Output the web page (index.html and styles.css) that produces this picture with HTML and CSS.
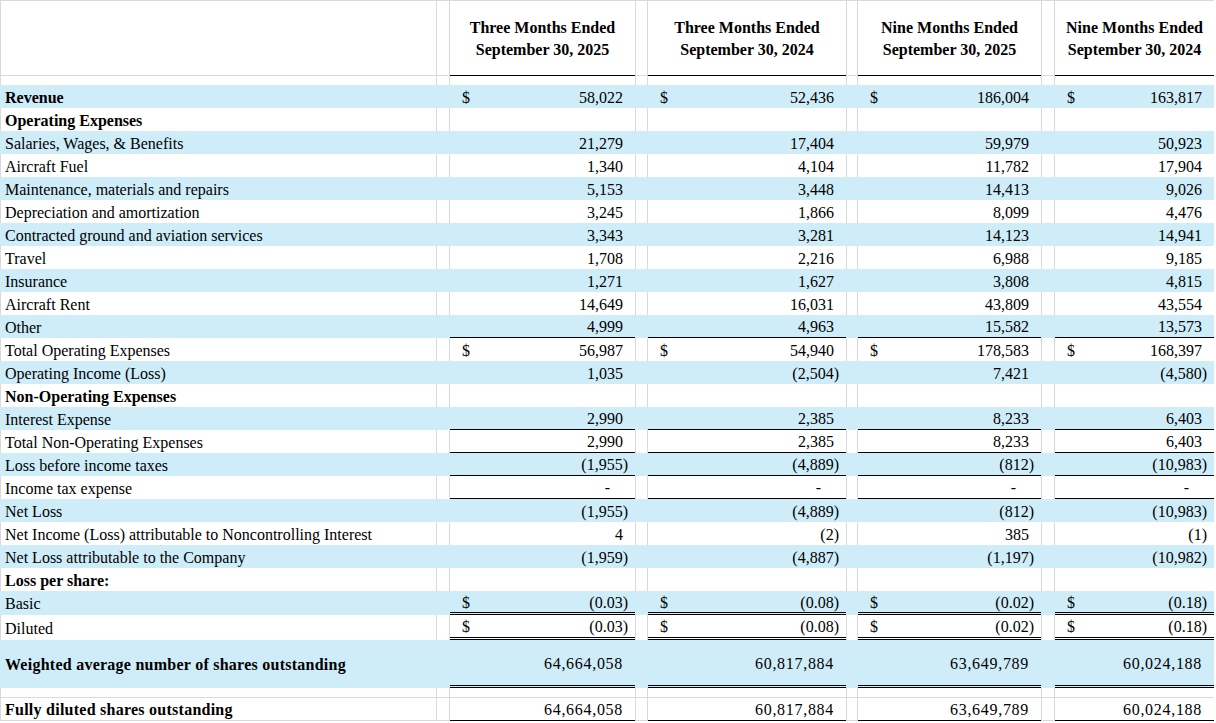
FILE: index.html
```html
<!DOCTYPE html>
<html lang="en">
<head>
<meta charset="utf-8">
<title>Consolidated Statements of Operations</title>
<link rel="stylesheet" href="styles.css">
</head>
<body>
<table class="fin">
  <colgroup>
    <col class="w-lbl"><col class="w-sp1"><col class="w-d1"><col class="w-sp2"><col class="w-d2"><col class="w-sp3"><col class="w-d3"><col class="w-sp4"><col class="w-d4">
  </colgroup>
  <thead>
    <tr class="hd">
      <th class="lbl"></th><th class="sp"></th>
      <th class="v">Three Months Ended<br>September 30, 2025</th><th class="sp"></th>
      <th class="v">Three Months Ended<br>September 30, 2024</th><th class="sp"></th>
      <th class="v">Nine Months Ended<br>September 30, 2025</th><th class="sp"></th>
      <th class="v">Nine Months Ended<br>September 30, 2024</th>
    </tr>
  </thead>
  <tbody>
    <tr class="gap"><td class="lbl"></td><td class="sp"></td><td class="v"></td><td class="sp"></td><td class="v"></td><td class="sp"></td><td class="v"></td><td class="sp"></td><td class="v"></td></tr>

    <tr class="b"><td class="lbl bold">Revenue</td><td class="sp"></td>
      <td class="v"><div class="amt"><span class="cur">$</span><span class="n">58,022</span></div></td><td class="sp"></td>
      <td class="v"><div class="amt"><span class="cur">$</span><span class="n">52,436</span></div></td><td class="sp"></td>
      <td class="v"><div class="amt"><span class="cur">$</span><span class="n">186,004</span></div></td><td class="sp"></td>
      <td class="v"><div class="amt"><span class="cur">$</span><span class="n">163,817</span></div></td></tr>

    <tr><td class="lbl bold">Operating Expenses</td><td class="sp"></td><td class="v"></td><td class="sp"></td><td class="v"></td><td class="sp"></td><td class="v"></td><td class="sp"></td><td class="v"></td></tr>

    <tr class="b"><td class="lbl">Salaries, Wages, &amp; Benefits</td><td class="sp"></td>
      <td class="v"><div class="amt"><span class="n">21,279</span></div></td><td class="sp"></td>
      <td class="v"><div class="amt"><span class="n">17,404</span></div></td><td class="sp"></td>
      <td class="v"><div class="amt"><span class="n">59,979</span></div></td><td class="sp"></td>
      <td class="v"><div class="amt"><span class="n">50,923</span></div></td></tr>

    <tr><td class="lbl">Aircraft Fuel</td><td class="sp"></td>
      <td class="v"><div class="amt"><span class="n">1,340</span></div></td><td class="sp"></td>
      <td class="v"><div class="amt"><span class="n">4,104</span></div></td><td class="sp"></td>
      <td class="v"><div class="amt"><span class="n">11,782</span></div></td><td class="sp"></td>
      <td class="v"><div class="amt"><span class="n">17,904</span></div></td></tr>

    <tr class="b"><td class="lbl">Maintenance, materials and repairs</td><td class="sp"></td>
      <td class="v"><div class="amt"><span class="n">5,153</span></div></td><td class="sp"></td>
      <td class="v"><div class="amt"><span class="n">3,448</span></div></td><td class="sp"></td>
      <td class="v"><div class="amt"><span class="n">14,413</span></div></td><td class="sp"></td>
      <td class="v"><div class="amt"><span class="n">9,026</span></div></td></tr>

    <tr><td class="lbl">Depreciation and amortization</td><td class="sp"></td>
      <td class="v"><div class="amt"><span class="n">3,245</span></div></td><td class="sp"></td>
      <td class="v"><div class="amt"><span class="n">1,866</span></div></td><td class="sp"></td>
      <td class="v"><div class="amt"><span class="n">8,099</span></div></td><td class="sp"></td>
      <td class="v"><div class="amt"><span class="n">4,476</span></div></td></tr>

    <tr class="b"><td class="lbl">Contracted ground and aviation services</td><td class="sp"></td>
      <td class="v"><div class="amt"><span class="n">3,343</span></div></td><td class="sp"></td>
      <td class="v"><div class="amt"><span class="n">3,281</span></div></td><td class="sp"></td>
      <td class="v"><div class="amt"><span class="n">14,123</span></div></td><td class="sp"></td>
      <td class="v"><div class="amt"><span class="n">14,941</span></div></td></tr>

    <tr><td class="lbl">Travel</td><td class="sp"></td>
      <td class="v"><div class="amt"><span class="n">1,708</span></div></td><td class="sp"></td>
      <td class="v"><div class="amt"><span class="n">2,216</span></div></td><td class="sp"></td>
      <td class="v"><div class="amt"><span class="n">6,988</span></div></td><td class="sp"></td>
      <td class="v"><div class="amt"><span class="n">9,185</span></div></td></tr>

    <tr class="b"><td class="lbl">Insurance</td><td class="sp"></td>
      <td class="v"><div class="amt"><span class="n">1,271</span></div></td><td class="sp"></td>
      <td class="v"><div class="amt"><span class="n">1,627</span></div></td><td class="sp"></td>
      <td class="v"><div class="amt"><span class="n">3,808</span></div></td><td class="sp"></td>
      <td class="v"><div class="amt"><span class="n">4,815</span></div></td></tr>

    <tr><td class="lbl">Aircraft Rent</td><td class="sp"></td>
      <td class="v"><div class="amt"><span class="n">14,649</span></div></td><td class="sp"></td>
      <td class="v"><div class="amt"><span class="n">16,031</span></div></td><td class="sp"></td>
      <td class="v"><div class="amt"><span class="n">43,809</span></div></td><td class="sp"></td>
      <td class="v"><div class="amt"><span class="n">43,554</span></div></td></tr>

    <tr class="b ul"><td class="lbl">Other</td><td class="sp"></td>
      <td class="v"><div class="amt"><span class="n">4,999</span></div></td><td class="sp"></td>
      <td class="v"><div class="amt"><span class="n">4,963</span></div></td><td class="sp"></td>
      <td class="v"><div class="amt"><span class="n">15,582</span></div></td><td class="sp"></td>
      <td class="v"><div class="amt"><span class="n">13,573</span></div></td></tr>

    <tr><td class="lbl">Total Operating Expenses</td><td class="sp"></td>
      <td class="v"><div class="amt"><span class="cur">$</span><span class="n">56,987</span></div></td><td class="sp"></td>
      <td class="v"><div class="amt"><span class="cur">$</span><span class="n">54,940</span></div></td><td class="sp"></td>
      <td class="v"><div class="amt"><span class="cur">$</span><span class="n">178,583</span></div></td><td class="sp"></td>
      <td class="v"><div class="amt"><span class="cur">$</span><span class="n">168,397</span></div></td></tr>

    <tr class="b"><td class="lbl">Operating Income (Loss)</td><td class="sp"></td>
      <td class="v"><div class="amt"><span class="n">1,035</span></div></td><td class="sp"></td>
      <td class="v"><div class="amt"><span class="n neg">(2,504)</span></div></td><td class="sp"></td>
      <td class="v"><div class="amt"><span class="n">7,421</span></div></td><td class="sp"></td>
      <td class="v"><div class="amt"><span class="n neg">(4,580)</span></div></td></tr>

    <tr><td class="lbl bold">Non-Operating Expenses</td><td class="sp"></td><td class="v"></td><td class="sp"></td><td class="v"></td><td class="sp"></td><td class="v"></td><td class="sp"></td><td class="v"></td></tr>

    <tr class="b ul"><td class="lbl">Interest Expense</td><td class="sp"></td>
      <td class="v"><div class="amt"><span class="n">2,990</span></div></td><td class="sp"></td>
      <td class="v"><div class="amt"><span class="n">2,385</span></div></td><td class="sp"></td>
      <td class="v"><div class="amt"><span class="n">8,233</span></div></td><td class="sp"></td>
      <td class="v"><div class="amt"><span class="n">6,403</span></div></td></tr>

    <tr class="ul"><td class="lbl">Total Non-Operating Expenses</td><td class="sp"></td>
      <td class="v"><div class="amt"><span class="n">2,990</span></div></td><td class="sp"></td>
      <td class="v"><div class="amt"><span class="n">2,385</span></div></td><td class="sp"></td>
      <td class="v"><div class="amt"><span class="n">8,233</span></div></td><td class="sp"></td>
      <td class="v"><div class="amt"><span class="n">6,403</span></div></td></tr>

    <tr class="b ul"><td class="lbl">Loss before income taxes</td><td class="sp"></td>
      <td class="v"><div class="amt"><span class="n neg">(1,955)</span></div></td><td class="sp"></td>
      <td class="v"><div class="amt"><span class="n neg">(4,889)</span></div></td><td class="sp"></td>
      <td class="v"><div class="amt"><span class="n neg">(812)</span></div></td><td class="sp"></td>
      <td class="v"><div class="amt"><span class="n neg">(10,983)</span></div></td></tr>

    <tr class="ul"><td class="lbl">Income tax expense</td><td class="sp"></td>
      <td class="v"><div class="amt"><span class="n zero">-</span></div></td><td class="sp"></td>
      <td class="v"><div class="amt"><span class="n zero">-</span></div></td><td class="sp"></td>
      <td class="v"><div class="amt"><span class="n zero">-</span></div></td><td class="sp"></td>
      <td class="v"><div class="amt"><span class="n zero">-</span></div></td></tr>

    <tr class="b"><td class="lbl">Net Loss</td><td class="sp"></td>
      <td class="v"><div class="amt"><span class="n neg">(1,955)</span></div></td><td class="sp"></td>
      <td class="v"><div class="amt"><span class="n neg">(4,889)</span></div></td><td class="sp"></td>
      <td class="v"><div class="amt"><span class="n neg">(812)</span></div></td><td class="sp"></td>
      <td class="v"><div class="amt"><span class="n neg">(10,983)</span></div></td></tr>

    <tr><td class="lbl">Net Income (Loss) attributable to Noncontrolling Interest</td><td class="sp"></td>
      <td class="v"><div class="amt"><span class="n">4</span></div></td><td class="sp"></td>
      <td class="v"><div class="amt"><span class="n neg">(2)</span></div></td><td class="sp"></td>
      <td class="v"><div class="amt"><span class="n">385</span></div></td><td class="sp"></td>
      <td class="v"><div class="amt"><span class="n neg">(1)</span></div></td></tr>

    <tr class="b"><td class="lbl">Net Loss attributable to the Company</td><td class="sp"></td>
      <td class="v"><div class="amt"><span class="n neg">(1,959)</span></div></td><td class="sp"></td>
      <td class="v"><div class="amt"><span class="n neg">(4,887)</span></div></td><td class="sp"></td>
      <td class="v"><div class="amt"><span class="n neg">(1,197)</span></div></td><td class="sp"></td>
      <td class="v"><div class="amt"><span class="n neg">(10,982)</span></div></td></tr>

    <tr><td class="lbl bold">Loss per share:</td><td class="sp"></td><td class="v"></td><td class="sp"></td><td class="v"></td><td class="sp"></td><td class="v"></td><td class="sp"></td><td class="v"></td></tr>

    <tr class="b dbl r24"><td class="lbl">Basic</td><td class="sp"></td>
      <td class="v"><div class="amt"><span class="cur">$</span><span class="n neg">(0.03)</span></div></td><td class="sp"></td>
      <td class="v"><div class="amt"><span class="cur">$</span><span class="n neg">(0.08)</span></div></td><td class="sp"></td>
      <td class="v"><div class="amt"><span class="cur">$</span><span class="n neg">(0.02)</span></div></td><td class="sp"></td>
      <td class="v"><div class="amt"><span class="cur">$</span><span class="n neg">(0.18)</span></div></td></tr>

    <tr class="dbl r25"><td class="lbl">Diluted</td><td class="sp"></td>
      <td class="v"><div class="amt"><span class="cur">$</span><span class="n neg">(0.03)</span></div></td><td class="sp"></td>
      <td class="v"><div class="amt"><span class="cur">$</span><span class="n neg">(0.08)</span></div></td><td class="sp"></td>
      <td class="v"><div class="amt"><span class="cur">$</span><span class="n neg">(0.02)</span></div></td><td class="sp"></td>
      <td class="v"><div class="amt"><span class="cur">$</span><span class="n neg">(0.18)</span></div></td></tr>

    <tr class="b dbl tall wide"><td class="lbl bold">Weighted average number of shares outstanding</td><td class="sp"></td>
      <td class="v"><div class="amt"><span class="n">64,664,058</span></div></td><td class="sp"></td>
      <td class="v"><div class="amt"><span class="n">60,817,884</span></div></td><td class="sp"></td>
      <td class="v"><div class="amt"><span class="n">63,649,789</span></div></td><td class="sp"></td>
      <td class="v"><div class="amt"><span class="n">60,024,188</span></div></td></tr>

    <tr class="gap"><td class="lbl"></td><td class="sp"></td><td class="v"></td><td class="sp"></td><td class="v"></td><td class="sp"></td><td class="v"></td><td class="sp"></td><td class="v"></td></tr>

    <tr class="ul last wide"><td class="lbl bold">Fully diluted shares outstanding</td><td class="sp"></td>
      <td class="v"><div class="amt"><span class="n">64,664,058</span></div></td><td class="sp"></td>
      <td class="v"><div class="amt"><span class="n">60,817,884</span></div></td><td class="sp"></td>
      <td class="v"><div class="amt"><span class="n">63,649,789</span></div></td><td class="sp"></td>
      <td class="v"><div class="amt"><span class="n">60,024,188</span></div></td></tr>
  </tbody>
</table>
</body>
</html>
```

FILE: styles.css
```css
html, body {
  margin: 0;
  padding: 0;
  background: #ffffff;
}

body {
  font-family: "Liberation Serif", "Times New Roman", serif;
  font-size: 16px;
  color: #000000;
}

.fin {
  width: 1214px;
  table-layout: fixed;
  border-collapse: separate;
  border-spacing: 0;
}

.w-lbl { width: 436px; }
.w-sp1 { width: 14px; }
.w-d1  { width: 185px; }
.w-sp2 { width: 13px; }
.w-d2  { width: 198px; }
.w-sp3 { width: 12px; }
.w-d3  { width: 183px; }
.w-sp4 { width: 14px; }
.w-d4  { width: 159px; }

.fin th,
.fin td {
  padding: 2px 0 0 0;
  vertical-align: middle;
  white-space: nowrap;
  line-height: 18px;
}

.fin tr { height: 23px; }

/* grid lines */
.fin .lbl {
  border-left: 1px solid #d9d9d9;
  padding-left: 4px;
  text-align: left;
}

.fin .sp {
  border-left: 1px solid #d9d9d9;
  border-right: 1px solid #d9d9d9;
}

.fin .v {
  padding: 2px 7px 0 12px;
}

.bold { font-weight: bold; }

/* header */
.fin tr.hd { height: 76px; }
.hd th {
  border-top: 1px solid #d9d9d9;
  border-bottom: 1px solid #d9d9d9;
  font-weight: bold;
  line-height: 22px;
  text-align: center;
}
.fin .hd th.v {
  border-bottom-color: #000000;
  padding: 2px 0 0 0;
}

.fin tr.gap { height: 9px; }
.fin tr.gap td { padding-top: 0; }

/* blue band rows */
.b td { background: #cfedf9; }
.b td.sp,
.b td.lbl { border-color: transparent; }

/* amounts */
.amt {
  display: flex;
  justify-content: space-between;
  align-items: baseline;
}
.amt .n { margin-left: auto; padding-right: 5px; }
.amt .n.neg { padding-right: 0; }
.amt .n.zero { padding-right: 18px; }

/* rules */
.ul td.v { border-bottom: 1px solid #000000; }
.dbl td.v { border-bottom: 3px double #000000; }

.fin tr.r24 { height: 24px; }
.fin tr.r25 { height: 25px; }
.fin tr.tall { height: 48px; }

.wide td.v { letter-spacing: 0.7px; }
.wide td.lbl { letter-spacing: 0.25px; }

.fin tr.last { height: 24px; }
.last td { border-top: 1px solid #d9d9d9; }
.last td.lbl,
.last td.sp { border-bottom: 1px solid #d9d9d9; }
```
